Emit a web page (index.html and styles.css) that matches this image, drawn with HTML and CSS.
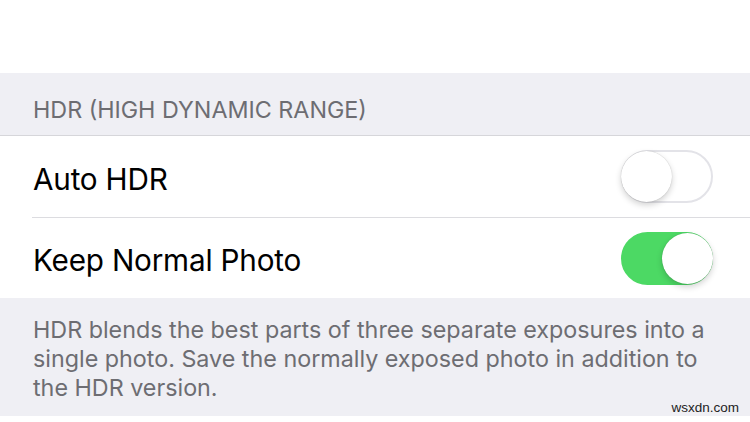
FILE: index.html
```html
<!DOCTYPE html>
<html>
<head>
<meta charset="utf-8">
<link rel="stylesheet" href="styles.css">
</head>
<body>
<div class="screen">
  <div class="top"></div>
  <div class="section-header">HDR (HIGH DYNAMIC RANGE)</div>
  <div class="group">
    <div class="row">
      <span class="label">Auto HDR</span>
      <span class="switch"><span class="knob"></span></span>
    </div>
    <div class="row">
      <span class="label">Keep Normal Photo</span>
      <span class="switch on"><span class="knob"></span></span>
    </div>
  </div>
  <div class="footer">
    <p class="note">HDR blends the best parts of three separate exposures into a single photo. Save the normally exposed photo in addition to the HDR version.</p>
    <span class="mark">wsxdn.com</span>
  </div>
  <div class="bottom"></div>
</div>
</body>
</html>
```

FILE: styles.css
```css
* { box-sizing: border-box; }
html, body { margin: 0; padding: 0; background: #fff; }
body { font-family: Inter, "Liberation Sans", sans-serif; }
.screen { width: 750px; height: 422px; overflow: hidden; display: flex; flex-direction: column; }
.top { height: 73px; background: #fff; flex: none; }
.section-header {
  height: 63px; flex: none;
  background: #efeff4;
  border-bottom: 1px solid #d6d6da;
  color: #6d6d72;
  font-size: 23.3px;
  padding: 23px 0 0 33px;
  line-height: 28px;
}
.group { background: #fff; flex: none; }
.row {
  height: 81px;
  display: flex; align-items: center; justify-content: space-between;
  padding: 0 37px 0 33px;
}
.row + .row { border-top: 1px solid #dcdce0; margin-left: 32px; padding-left: 1px; }
.label { font-size: 29.7px; color: #000; letter-spacing: -0.2px; padding-top: 4px; }
.switch {
  width: 92px; height: 53px; border-radius: 27px;
  border: 2px solid #e3e3e8; background: #fff;
  display: flex; align-items: center;
}
.knob {
  width: 51px; height: 51px; border-radius: 50%; background: #fff;
  box-shadow: 0 3px 6px rgba(0,0,0,0.18), 0 0 1px rgba(0,0,0,0.25);
  margin-left: -2px;
}
.switch.on { background: #4cd964; border-color: #4cd964; justify-content: flex-end; }
.switch.on .knob { margin-left: 0; margin-right: -2px; }
.footer {
  background: #efeff4; flex: none; height: 118px;
  padding: 17px 27px 0 33px; position: relative;
}
.note { margin: 0; color: #6d6d72; font-size: 23.3px; line-height: 29px; }
.mark { position: absolute; right: 11px; bottom: 1px; font-family: "Liberation Sans", sans-serif; font-size: 13.5px; color: #222; }
.bottom { flex: 1; background: #fff; }
```
